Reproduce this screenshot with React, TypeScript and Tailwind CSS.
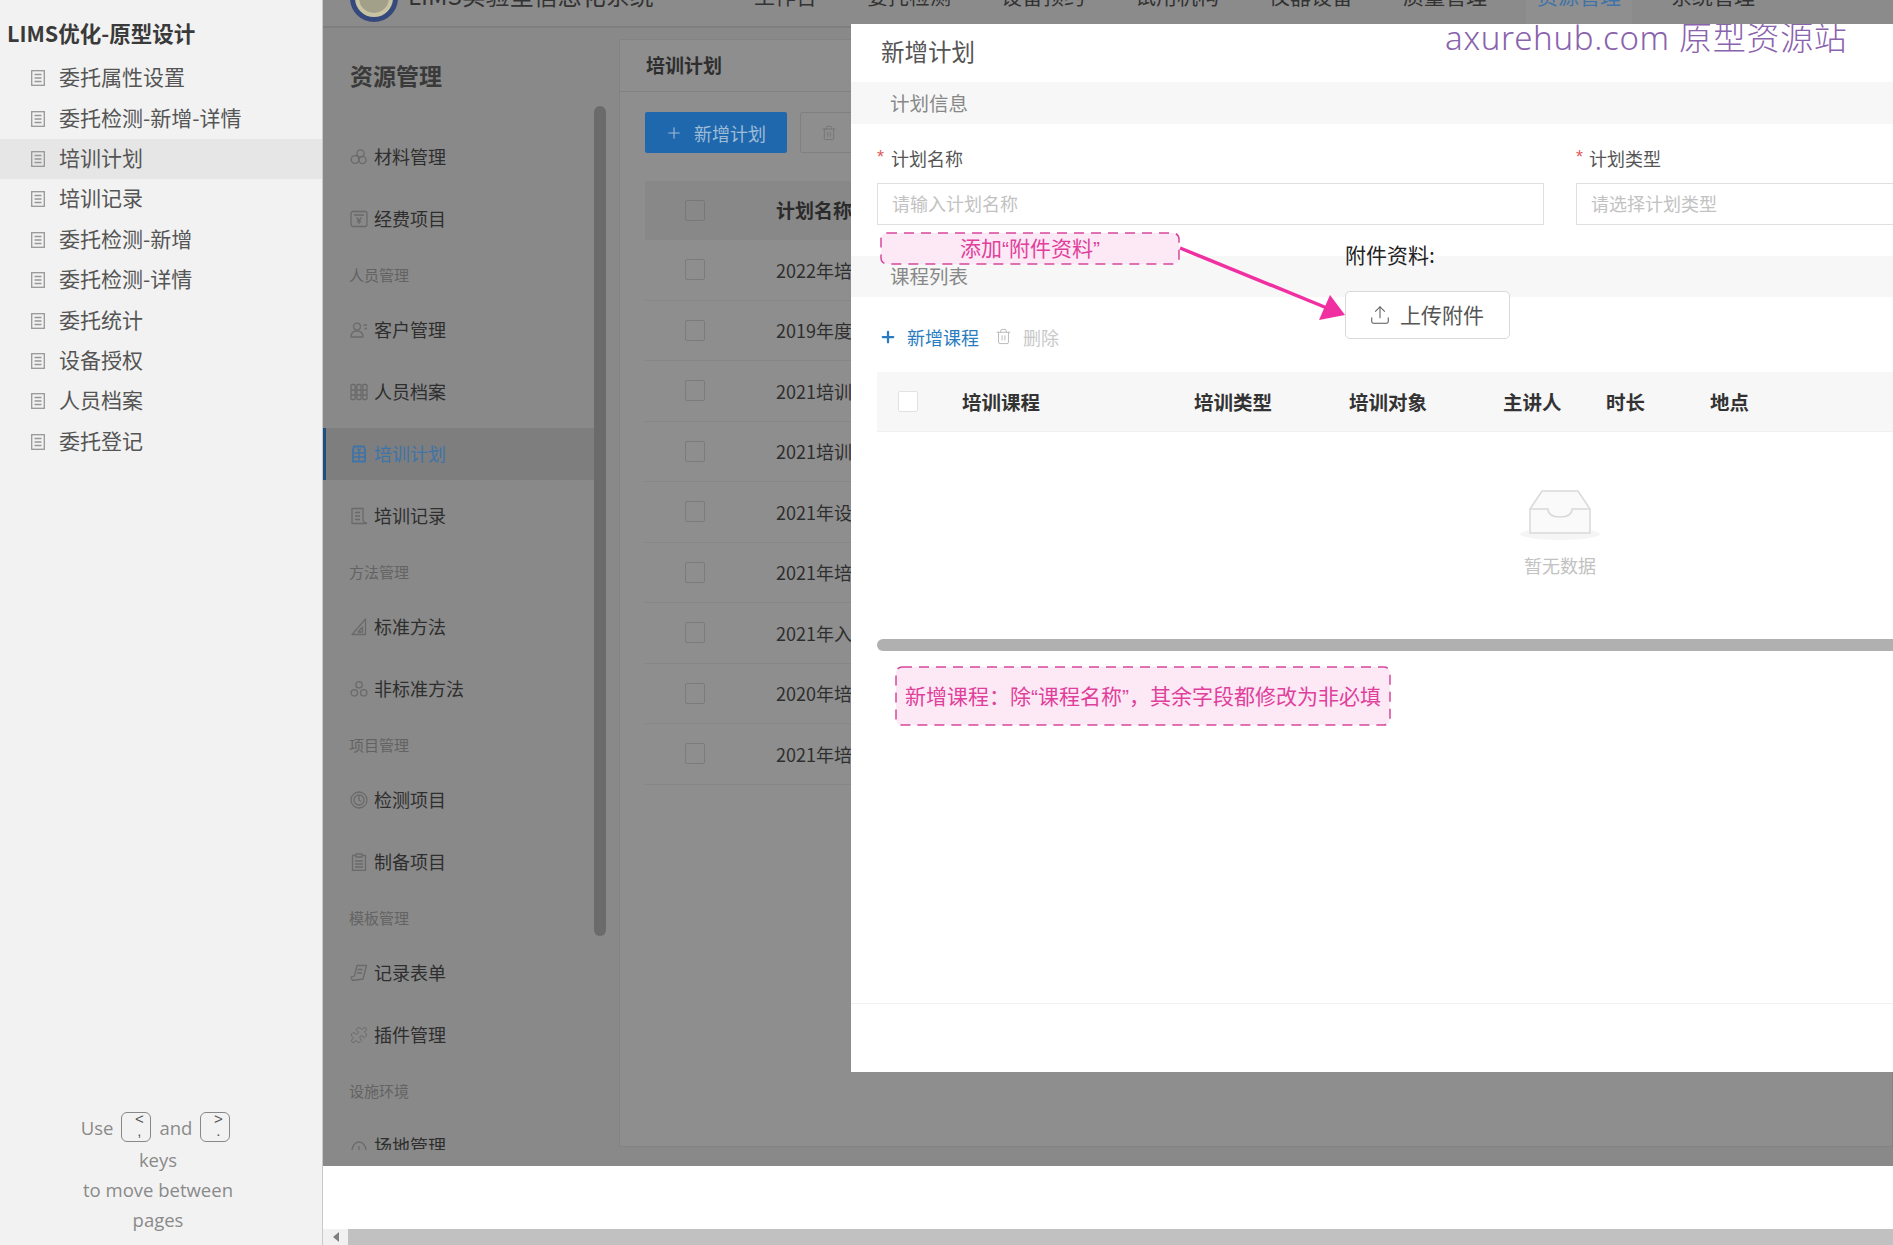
import { Puzzle, Plus, Trash2, Upload } from "lucide-react";

const pages = [
  "委托属性设置",
  "委托检测-新增-详情",
  "培训计划",
  "培训记录",
  "委托检测-新增",
  "委托检测-详情",
  "委托统计",
  "设备授权",
  "人员档案",
  "委托登记",
];

const navItems = ["委托检测", "设备预约", "试用机构", "仪器设备", "质量管理", "资源管理", "系统管理"];

const planRows = [
  "2022年培训计划",
  "2019年度培训",
  "2021培训计划",
  "2021培训计划",
  "2021年设备培训",
  "2021年培训计划",
  "2021年入职培训",
  "2020年培训计划",
  "2021年培训计划",
];

function PageIcon() {
  return (
    <svg width="14" height="16" viewBox="0 0 14 16" fill="none" stroke="#979797" strokeWidth="1.3">
      <rect x="0.7" y="0.7" width="12.6" height="14.6" />
      <path d="M3.5 4.5h7M3.5 8h7M3.5 11.5h7" />
    </svg>
  );
}

function MenuSvg({ children, color = "#6a6a6a" }: { children: React.ReactNode; color?: string }) {
  return (
    <svg width="18" height="18" viewBox="0 0 18 18" fill="none" stroke={color} strokeWidth="1.3" strokeLinejoin="round">
      {children}
    </svg>
  );
}

const icons = {
  material: (
    <MenuSvg>
      <circle cx="10.5" cy="5.5" r="3.6" />
      <circle cx="5" cy="11.5" r="3.8" />
      <circle cx="12.5" cy="12" r="3.6" />
    </MenuSvg>
  ),
  fund: (
    <MenuSvg>
      <rect x="1" y="1.5" width="16" height="15" rx="2" />
      <path d="M4 5h10M6.5 7.5 9 10.5l2.5-3M9 10.5V14M6.8 11.5h4.4" />
    </MenuSvg>
  ),
  client: (
    <MenuSvg>
      <circle cx="7" cy="5.5" r="3.4" />
      <path d="M1 16c0-4 2.500-6 6-6s6 2 6 6ZM13.500 4H17M14.500 7.500H17" />
    </MenuSvg>
  ),
  staff: (
    <MenuSvg>
      <rect x="1" y="1.500" width="4.200" height="15" rx="1" />
      <rect x="6.900" y="1.500" width="4.200" height="15" rx="1" />
      <rect x="12.800" y="1.500" width="4.200" height="15" rx="1" />
      <path d="M1 7h4M7 7h4M13 7h4M1 12h4M7 12h4M13 12h4" />
    </MenuSvg>
  ),
  plan: (
    <MenuSvg color="#3f74a8">
      <path d="M4 1.500h10l1 3v12H3v-12Z" strokeWidth="1.800" />
      <path d="M3 8h12M3 12h12M7 4.500h4M9 4.500v11" strokeWidth="1.400" />
    </MenuSvg>
  ),
  record: (
    <MenuSvg>
      <path d="M13 12V1.500H2v15h15" />
      <path d="M5 5.500h5M5 9h5M5 12.500h5M13 12c0 2.500 1.500 4 4 4.500" />
    </MenuSvg>
  ),
  standard: (
    <MenuSvg>
      <path d="M15.500 1 2 16.500h13.500Z" />
      <path d="M12.500 9 8 14h4.500Z" />
    </MenuSvg>
  ),
  nonStandard: (
    <MenuSvg>
      <circle cx="9" cy="4.800" r="3.200" />
      <circle cx="4.300" cy="12.800" r="3.200" />
      <circle cx="13.700" cy="12.800" r="3.200" />
    </MenuSvg>
  ),
  test: (
    <MenuSvg>
      <circle cx="9" cy="9" r="8" />
      <circle cx="9" cy="9" r="5" />
      <path d="M9 5v4l2 1.500" />
    </MenuSvg>
  ),
  prepare: (
    <MenuSvg>
      <path d="M6 2.500H2.500v15h13v-15H12" />
      <rect x="6" y="1" width="6" height="3" />
      <path d="M5 8h8M5 11h8M5 14h8" />
    </MenuSvg>
  ),
  form: (
    <MenuSvg>
      <path d="M7 1.500h9.500L13 15 2.500 16.500 1 13l3.500-1Z" />
      <path d="M7.500 5.500h5M7 9h5" />
    </MenuSvg>
  ),
  site: (
    <MenuSvg>
      <path d="M2 14c0-5 3-9 7-9s7 4 7 9ZM9 9v5" />
    </MenuSvg>
  ),
};

function MenuItem({ icon, label, active }: { icon: React.ReactNode; label: string; active?: boolean }) {
  if (active) {
    return (
      <div className="flex h-[62px] items-center">
        <div className="flex h-[52px] w-full items-center border-l-[3px] border-[#1f4f7d] bg-[#7e7e7e] pl-[24px] text-[#3f74a8]">
          <span className="flex w-[24px] shrink-0">{icon}</span>
          <span className="pb-[2px] text-[18px] leading-none">{label}</span>
        </div>
      </div>
    );
  }
  return (
    <div className="flex h-[62px] items-center pl-[27px]">
      <span className="flex w-[24px] shrink-0">{icon}</span>
      <span className="pb-[2px] text-[18px] leading-none text-[#2e2e2e]">{label}</span>
    </div>
  );
}

function MenuGroup({ label }: { label: string }) {
  return <div className="flex h-[49px] items-center pl-[26px] text-[15px] leading-none text-[#636363]">{label}</div>;
}

function Key({ top, bottom }: { top: string; bottom: string }) {
  return (
    <span className="mx-[8px] inline-flex h-[30px] w-[30px] translate-y-[-3px] flex-col rounded-[6px] border-[1.5px] border-[#888] pl-[6px] align-middle font-['Liberation_Sans',sans-serif] text-[15px] leading-[12px] text-[#555]">
      <span>{top}</span>
      <span>{bottom}</span>
    </span>
  );
}

function Checkbox({ className }: { className: string }) {
  return <span className={"block h-[21px] w-[20px] rounded-[2px] border " + className} />;
}

// long dashed outline, css dashed borders come out too short here
function Note({ className, width, height, text }: { className: string; width: number; height: number; text: string }) {
  return (
    <div className={"absolute flex items-center justify-center font-['Liberation_Sans','Noto_Sans_CJK_SC',sans-serif] text-[21px] leading-none text-[#e0409b] " + className}>
      <svg className="absolute inset-0" width={width} height={height} viewBox={`0 0 ${width} ${height}`}>
        <rect
          x="1"
          y="1"
          width={width - 2}
          height={height - 2}
          rx="6"
          fill="#fde8f5"
          stroke="#d6479c"
          strokeWidth="1.500"
          strokeDasharray="10 7"
        />
      </svg>
      <span className="relative whitespace-nowrap">{text}</span>
    </div>
  );
}

export default function App() {
  return (
    <div className="flex h-[1245px] w-[1893px] overflow-hidden bg-white font-['Noto_Sans_CJK_SC','Liberation_Sans',sans-serif]">
      <aside className="flex w-[323px] shrink-0 flex-col border-r border-[#c9c9c9] bg-[#f2f2f2]">
        <div className="flex h-[58px] items-center pl-[7px] pt-[8px] text-[21.500px] font-bold leading-none text-[#3a3a3a]">
          LIMS优化-原型设计
        </div>
        <div className="flex flex-col">
          {pages.map((page) => (
            <div
              key={page}
              className={
                page === "培训计划"
                  ? "flex h-[40.400px] items-center bg-[#e6e6e6] pl-[31px]"
                  : "flex h-[40.400px] items-center pl-[31px]"
              }
            >
              <PageIcon />
              <span className="ml-[14px] pb-[3px] text-[21px] leading-none text-[#555]">{page}</span>
            </div>
          ))}
        </div>
        <div className="mt-auto flex flex-col items-center pb-[10px] pl-[54px] pr-[60px] text-center font-['Open_Sans',sans-serif] text-[18.500px] leading-[30px] text-[#8a8a8a]">
          <div className="ml-[3px] whitespace-nowrap">
            Use
            <Key top="<" bottom="," />
            and
            <Key top=">" bottom="." />
          </div>
          <div>keys</div>
          <div className="whitespace-nowrap">to move between</div>
          <div>pages</div>
        </div>
      </aside>

      <div className="flex min-w-0 flex-1 flex-col">
        <main className="relative flex h-[1166px] shrink-0 flex-col overflow-hidden bg-[#898989]">
          <header className="h-[28px] shrink-0 overflow-hidden border-b-[2px] border-[#7f7f7f] bg-[#8b8b8b]">
            <div className="-mt-[35px] flex h-[60px] items-center pl-[27px] text-[21px] leading-none text-[#333]">
              <svg width="48" height="48" viewBox="0 0 48 48" className="mt-[6px] shrink-0">
                <circle cx="24" cy="24" r="21.500" fill="#c9c4a4" stroke="#36497c" strokeWidth="5" />
                <circle cx="24" cy="24" r="15" fill="#a3a08a" />
              </svg>
              <span className="ml-[10px] w-[346px] shrink-0 text-[24px]">LIMS实验室信息化系统</span>
              <span className="w-[113px] shrink-0">工作台</span>
              <div className="flex items-center gap-[50px]">
                {navItems.map((item) => (
                  <span key={item} className={item === "资源管理" ? "-mx-[11px] bg-[#8f8f8f] px-[11px] py-[19px] text-[#3f74a8]" : ""}>
                    {item}
                  </span>
                ))}
              </div>
            </div>
          </header>

          <div className="flex min-h-0 flex-1">
            <div className="flex w-[296px] shrink-0">
              <div className="h-[1122px] w-[271px] shrink-0 overflow-hidden">
                <div className="flex h-[98px] items-center pb-[3px] pl-[27px] text-[23px] font-bold leading-none text-[#3a3a3a]">
                  资源管理
                </div>
                <MenuItem icon={icons.material} label="材料管理" />
                <MenuItem icon={icons.fund} label="经费项目" />
                <MenuGroup label="人员管理" />
                <MenuItem icon={icons.client} label="客户管理" />
                <MenuItem icon={icons.staff} label="人员档案" />
                <MenuItem active icon={icons.plan} label="培训计划" />
                <MenuItem icon={icons.record} label="培训记录" />
                <MenuGroup label="方法管理" />
                <MenuItem icon={icons.standard} label="标准方法" />
                <MenuItem icon={icons.nonStandard} label="非标准方法" />
                <MenuGroup label="项目管理" />
                <MenuItem icon={icons.test} label="检测项目" />
                <MenuItem icon={icons.prepare} label="制备项目" />
                <MenuGroup label="模板管理" />
                <MenuItem icon={icons.form} label="记录表单" />
                <MenuItem icon={<span className="flex text-[#6a6a6a]"><Puzzle size={18} strokeWidth={1.3} /></span>} label="插件管理" />
                <MenuGroup label="设施环境" />
                <MenuItem icon={icons.site} label="场地管理" />
              </div>
              <div className="mt-[78px] h-[830px] w-[12px] shrink-0 rounded-full bg-[#6b6b6b]" />
            </div>

            <section className="mt-[11px] h-[1108px] min-w-0 flex-1 border border-[#838383] bg-[#8e8e8e]">
              <div className="flex h-[52px] items-center border-b border-[#828282] pb-[3px] pl-[26px] text-[19px] font-bold leading-none text-[#2e2e2e]">
                培训计划
              </div>
              <div className="pl-[25px]">
                <div className="mt-[20px] flex items-center gap-[13px]">
                  <div className="flex h-[41px] w-[142px] items-center rounded-[2px] bg-[#2068ad] pl-[20px] text-[18px] leading-none text-[#9dbcd8]">
                    <Plus size={18} strokeWidth={1.5} />
                    <span className="ml-[11px]">新增计划</span>
                  </div>
                  <div className="flex h-[41px] w-[142px] items-center rounded-[2px] border border-[#808080] pl-[20px] text-[#757575]">
                    <Trash2 size={16} strokeWidth={1.4} />
                  </div>
                </div>
                <div className="mt-[28px] flex h-[59px] items-center bg-[#888888] pl-[40px] pr-[20px]">
                  <Checkbox className="border-[#787878]" />
                  <span className="ml-[71px] pb-[2px] text-[19px] font-bold leading-none text-[#2b2b2b]">计划名称</span>
                </div>
                {planRows.map((row, i) => (
                  <div key={i} className="flex h-[60.500px] items-center border-b border-[#868686] pl-[40px]">
                    <Checkbox className="border-[#7b7b7b]" />
                    <span className="ml-[71px] whitespace-nowrap text-[18px] leading-none text-[#2e2e2e]">{row}</span>
                  </div>
                ))}
              </div>
            </section>
          </div>

          {/* dialog, lies over the dimmed page */}
          <div className="absolute left-[528px] right-0 top-[24px] h-[1048px] overflow-hidden bg-white">
            <div className="flex h-[58px] items-center pb-[3px] pl-[30px] text-[23.500px] leading-none text-[#555]">新增计划</div>
            <div className="flex h-[42px] items-center bg-[#f7f7f7] pl-[39px] text-[19.500px] leading-none text-[#888]">计划信息</div>

            <div className="flex h-[132px] gap-[32px] pl-[26px] pt-[22px]">
              <div className="w-[667px] shrink-0">
                <div className="flex h-[24px] items-center text-[18px] leading-none text-[#555]">
                  <span className="w-[14px] pb-[2px] font-['Liberation_Sans',sans-serif] text-[18px] text-[#e05a5a]">*</span>计划名称
                </div>
                <div className="mt-[13px] flex h-[42px] items-center border border-[#dfdfdf] pb-[2px] pl-[14px] text-[18px] leading-none text-[#c2c2c2]">
                  请输入计划名称
                </div>
              </div>
              <div className="w-[480px] shrink-0">
                <div className="flex h-[24px] items-center text-[18px] leading-none text-[#555]">
                  <span className="w-[13px] pb-[2px] font-['Liberation_Sans',sans-serif] text-[18px] text-[#e05a5a]">*</span>计划类型
                </div>
                <div className="mt-[13px] flex h-[42px] items-center border border-[#dfdfdf] pb-[2px] pl-[14px] text-[18px] leading-none text-[#c2c2c2]">
                  请选择计划类型
                </div>
              </div>
            </div>

            <div className="flex h-[41px] items-center bg-[#f7f7f7] pb-[2px] pl-[39px] text-[19.500px] leading-none text-[#888]">课程列表</div>

            <div className="flex h-[75px] items-center pl-[28px] pt-[4px] text-[18px] leading-none">
              <Plus size={18} strokeWidth={3} className="text-[#2a7cc0]" />
              <span className="ml-[10px] text-[#2a7cc0]">新增课程</span>
              <Trash2 size={17} strokeWidth={1.3} className="ml-[16px] text-[#b5b5b5]" />
              <span className="ml-[11px] text-[#c8c8c8]">删除</span>
            </div>

            <div className="ml-[26px] grid h-[60px] w-[1200px] grid-cols-[85px_232px_155px_154px_103px_104px_1fr] items-center border-b border-[#f0f0f0] bg-[#f7f7f7] text-[19.500px] font-bold leading-none text-[#333]">
              <span className="pl-[21px]">
                <span className="block h-[21px] w-[20px] rounded-[2px] border border-[#e2e2e2] bg-white" />
              </span>
              <span>培训课程</span>
              <span>培训类型</span>
              <span>培训对象</span>
              <span>主讲人</span>
              <span>时长</span>
              <span>地点</span>
            </div>

            <div className="ml-[26px] flex h-[207px] w-[1366px] flex-col items-center pt-[57px]">
              <svg width="80" height="52" viewBox="0 0 80 52" fill="none">
                <ellipse cx="40" cy="45" rx="40" ry="6" fill="#f5f5f5" />
                <path d="M10 20 22 2h36l12 18v24H10Z" fill="#fafafa" stroke="#d9d9d9" strokeWidth="1.5" />
                <path d="M10 20h18c0 5 4 8 12 8s12-3 12-8h18" fill="none" stroke="#d9d9d9" strokeWidth="1.5" />
              </svg>
              <div className="mt-[15px] text-[18px] leading-none text-[#c2c2c2]">暂无数据</div>
            </div>

            <div className="ml-[26px] h-[12px] w-[1300px] rounded-full bg-[#b0b0b0]" />

            <div className="h-[353px] border-b border-[#f0f0f0]" />

            <div className="absolute left-[594px] top-[-4px] whitespace-nowrap font-['Noto_Sans',sans-serif] text-[33px] font-light leading-none tracking-[0.700px] text-[#8a63ad]">
              axurehub.com <span className="font-['Noto_Sans_CJK_SC',sans-serif]">原型资源站</span>
            </div>

            <Note className="left-[29px] top-[208px] h-[33px] w-[300px]" width={300} height={33} text="添加“附件资料”" />

            <svg className="absolute left-[320px] top-[215px]" width="190" height="95" viewBox="0 0 190 95">
              <path d="M9 9 156 69" stroke="#f02fa0" strokeWidth="3.500" />
              <path d="M174 76 159 56 148 81Z" fill="#f02fa0" />
            </svg>

            <div className="absolute left-[494px] top-[218px] text-[21px] leading-[24px] text-[#222]">附件资料:</div>

            <div className="absolute left-[494px] top-[267px] flex h-[48px] w-[165px] items-center rounded-[5px] border border-[#d9d9d9] bg-white pl-[23px] text-[21px] leading-none text-[#555]">
              <Upload size={22} strokeWidth={1.1} />
              <span className="ml-[9px] pb-[2px]">上传附件</span>
            </div>

            <Note className="left-[44px] top-[642px] h-[60px] w-[496px]" width={496} height={60} text="新增课程：除“课程名称”，其余字段都修改为非必填" />
          </div>
        </main>

        <div className="flex-1 bg-white" />

        <div className="flex h-[16px] shrink-0 bg-[#f1f1f1]">
          <div className="flex w-[25px] items-center justify-center">
            <span className="h-0 w-0 border-y-[5px] border-r-[6px] border-y-transparent border-r-[#808080]" />
          </div>
          <div className="flex-1 bg-[#c1c1c1]" />
        </div>
      </div>
    </div>
  );
}
